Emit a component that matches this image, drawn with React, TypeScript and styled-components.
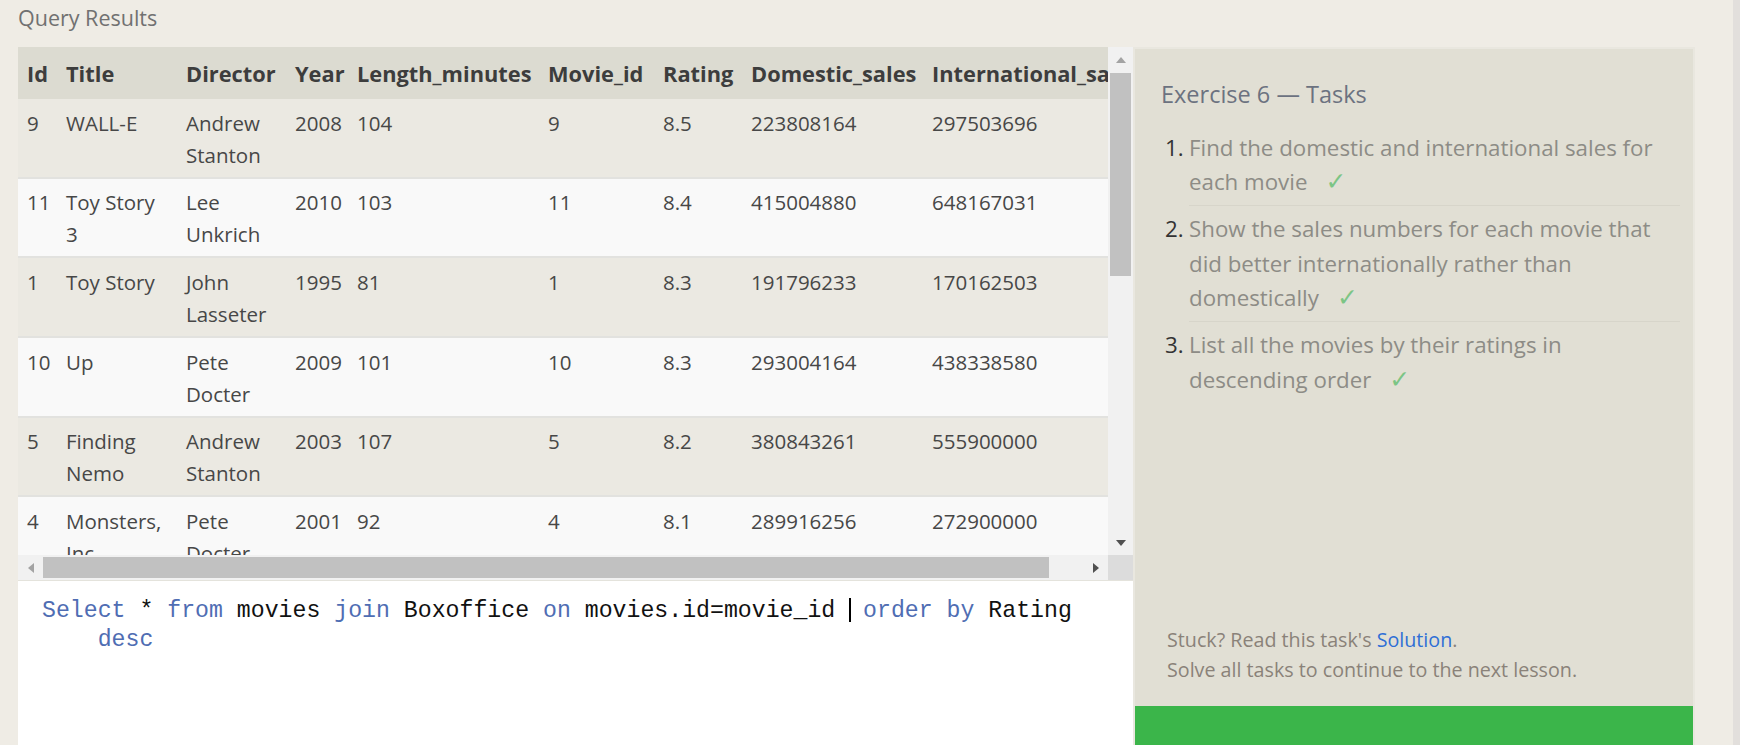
import React from "react";
import styled, { createGlobalStyle } from "styled-components";

const GlobalStyle = createGlobalStyle`
  html, body { margin: 0; padding: 0; }
  body {
    background: #efece5;
    font-family: "Open Sans", "Noto Sans", sans-serif;
    overflow: hidden;
  }
`;

const Page = styled.div`
  display: flex;
  width: 1740px;
  height: 745px;
  overflow: hidden;
`;

const Content = styled.div`
  flex: 1;
  min-width: 0;
  display: flex;
  flex-direction: column;
  padding-left: 18px;
`;

const WindowStrip = styled.div`
  width: 7px;
  background: #e2dfdc;
`;

const Heading = styled.h2`
  margin: 0;
  height: 47px;
  box-sizing: border-box;
  padding-top: 5px;
  font-size: 21.5px;
  line-height: 26px;
  font-weight: 400;
  color: #717171;
`;

const Main = styled.div`
  flex: 1;
  min-height: 0;
  display: flex;
`;

const LeftCol = styled.div`
  width: 1115px;
  display: flex;
  flex-direction: column;
`;

const ResultsBox = styled.div`
  display: grid;
  grid-template-columns: 1090px 25px;
  grid-template-rows: 508px 25px;
`;

const Viewport = styled.div`
  overflow: hidden;
  background: #f9f9f9;
`;

const Table = styled.table`
  border-collapse: collapse;
  table-layout: fixed;
  width: 1110px;
  font-size: 20.5px;
  color: #474747;
`;

const Col = styled.col<{ $w: number }>`
  width: ${(p) => p.$w}px;
`;

const HeadCell = styled.th`
  text-align: left;
  background: #dcdbd1;
  font-weight: 700;
  font-size: 21.8px;
  color: #3d3d3d;
  padding: 11px 9px 9px;
  line-height: 32px;
  white-space: nowrap;
`;

const Row = styled.tr<{ $alt: boolean }>`
  background: ${(p) => (p.$alt ? "#f9f9f9" : "#ebe9e2")};
`;

const Cell = styled.td`
  padding: 7.5px 9px 6.2px;
  line-height: 32px;
  vertical-align: top;
  white-space: pre-line;
  border-bottom: 2px solid #e2e2df;
`;

const VScroll = styled.div`
  background: #f1f1f1;
  display: flex;
  flex-direction: column;
  align-items: center;
`;

const HScroll = styled.div`
  background: #f1f1f1;
  display: flex;
  align-items: center;
`;

const Corner = styled.div`
  background: #dcdcdc;
`;

const ArrowBtn = styled.div<{ $size: number }>`
  flex: 0 0 ${(p) => p.$size}px;
  width: 25px;
  height: 25px;
  display: flex;
  align-items: center;
  justify-content: center;
`;

const VThumb = styled.div`
  width: 21px;
  height: 203px;
  background: #c1c1c1;
`;

const HThumb = styled.div`
  width: 1006px;
  height: 21px;
  background: #c1c1c1;
`;

const Spacer = styled.div`
  flex: 1;
`;

const Editor = styled.div`
  flex: 1;
  background: #ffffff;
  border-top: 1px solid #e4e3dc;
  padding: 16px 24px 0;
  font-family: "Liberation Mono", "DejaVu Sans Mono", monospace;
  font-size: 23.2px;
  line-height: 29px;
  color: #111111;
  white-space: pre;
`;

const CodeLine = styled.div<{ $indent?: number }>`
  padding-left: ${(p) => (p.$indent ?? 0) * 13.92}px;
`;

const Kw = styled.span`
  color: #4f6db3;
`;

const Caret = styled.span`
  display: inline-block;
  width: 2px;
  margin-right: -2px;
  height: 24px;
  vertical-align: -5px;
  background: #000;
`;

const Panel = styled.aside`
  width: 562px;
  box-sizing: border-box;
  border: 2px solid #e9e7df;
  border-bottom: none;
  background: #e1dfd4;
  display: flex;
  flex-direction: column;
`;

const PanelBody = styled.div`
  padding: 29px 13px 0 26px;
`;

const PanelTitle = styled.h3`
  margin: 0 0 14.5px;
  font-size: 23.5px;
  line-height: 32px;
  font-weight: 400;
  color: #6c7280;
`;

const TaskList = styled.ol`
  list-style: none;
  margin: 0 0 0 4px;
  padding: 0;
`;

const TaskItem = styled.li`
  display: flex;
  font-size: 22.3px;
  line-height: 34.5px;
`;

const TaskNum = styled.span`
  flex: 0 0 24px;
  color: #333333;
  padding-top: 6px;
`;

const TaskText = styled.div<{ $last: boolean }>`
  flex: 1;
  color: #8d8c86;
  padding: 6px 0 5.5px;
  border-bottom: ${(p) => (p.$last ? "none" : "1px solid #d7d5ca")};
`;

const Check = styled.span`
  font-family: "DejaVu Sans", sans-serif;
  font-size: 25px;
  line-height: 1;
  color: #7cc585;
  margin-left: 18px;
`;

const Footer = styled.div`
  margin-top: auto;
  padding: 0 0 21.5px 32px;
  font-size: 19.7px;
  line-height: 30px;
  color: #8a8279;
`;

const Link = styled.a`
  color: #2f6fd6;
  text-decoration: none;
`;

const GoButton = styled.div`
  height: 39px;
  flex: 0 0 39px;
  background: #3bb54a;
`;

type Dir = "up" | "down" | "left" | "right";

const Tri: React.FC<{ dir: Dir; on: boolean }> = ({ dir, on }) => {
  const fill = on ? "#505050" : "#a3a3a3";
  const pts: Record<Dir, string> = {
    up: "0,6 5,0 10,6",
    down: "0,0 10,0 5,6",
    left: "6,0 6,10 0,5",
    right: "0,0 6,5 0,10",
  };
  const vertical = dir === "up" || dir === "down";
  return (
    <svg
      width={vertical ? 10 : 6}
      height={vertical ? 6 : 10}
      viewBox={vertical ? "0 0 10 6" : "0 0 6 10"}
    >
      <polygon points={pts[dir]} fill={fill} />
    </svg>
  );
};

const columns: { name: string; w: number }[] = [
  { name: "Id", w: 39 },
  { name: "Title", w: 120 },
  { name: "Director", w: 109 },
  { name: "Year", w: 62 },
  { name: "Length_minutes", w: 191 },
  { name: "Movie_id", w: 115 },
  { name: "Rating", w: 88 },
  { name: "Domestic_sales", w: 181 },
  { name: "International_sales", w: 205 },
];

const rows: string[][] = [
  ["9", "WALL-E", "Andrew\nStanton", "2008", "104", "9", "8.5", "223808164", "297503696"],
  ["11", "Toy Story\n3", "Lee\nUnkrich", "2010", "103", "11", "8.4", "415004880", "648167031"],
  ["1", "Toy Story", "John\nLasseter", "1995", "81", "1", "8.3", "191796233", "170162503"],
  ["10", "Up", "Pete\nDocter", "2009", "101", "10", "8.3", "293004164", "438338580"],
  ["5", "Finding\nNemo", "Andrew\nStanton", "2003", "107", "5", "8.2", "380843261", "555900000"],
  ["4", "Monsters,\nInc.", "Pete\nDocter", "2001", "92", "4", "8.1", "289916256", "272900000"],
];

const tasks: string[] = [
  "Find the domestic and international sales for each movie",
  "Show the sales numbers for each movie that did better internationally rather than domestically",
  "List all the movies by their ratings in descending order",
];

export default function App() {
  return (
    <>
      <GlobalStyle />
      <Page>
        <Content>
          <Heading>Query Results</Heading>
          <Main>
            <LeftCol>
              <ResultsBox>
                <Viewport>
                  <Table>
                    <colgroup>
                      {columns.map((c) => (
                        <Col key={c.name} $w={c.w} />
                      ))}
                    </colgroup>
                    <thead>
                      <tr>
                        {columns.map((c) => (
                          <HeadCell key={c.name}>{c.name}</HeadCell>
                        ))}
                      </tr>
                    </thead>
                    <tbody>
                      {rows.map((r, i) => (
                        <Row key={i} $alt={i % 2 === 1}>
                          {r.map((v, j) => (
                            <Cell key={j}>{v}</Cell>
                          ))}
                        </Row>
                      ))}
                    </tbody>
                  </Table>
                </Viewport>
                <VScroll>
                  <ArrowBtn $size={26}>
                    <Tri dir="up" on={false} />
                  </ArrowBtn>
                  <VThumb />
                  <Spacer />
                  <ArrowBtn $size={25}>
                    <Tri dir="down" on={true} />
                  </ArrowBtn>
                </VScroll>
                <HScroll>
                  <ArrowBtn $size={25}>
                    <Tri dir="left" on={false} />
                  </ArrowBtn>
                  <HThumb />
                  <Spacer />
                  <ArrowBtn $size={25}>
                    <Tri dir="right" on={true} />
                  </ArrowBtn>
                </HScroll>
                <Corner />
              </ResultsBox>
              <Editor>
                <CodeLine>
                  <Kw>Select</Kw> * <Kw>from</Kw> movies <Kw>join</Kw> Boxoffice <Kw>on</Kw>{" "}
                  movies.id=movie_id <Caret /> <Kw>order</Kw> <Kw>by</Kw> Rating
                </CodeLine>
                <CodeLine $indent={4}>
                  <Kw>desc</Kw>
                </CodeLine>
              </Editor>
            </LeftCol>
            <Panel>
              <PanelBody>
                <PanelTitle>Exercise 6 — Tasks</PanelTitle>
                <TaskList>
                  {tasks.map((t, i) => (
                    <TaskItem key={i}>
                      <TaskNum>{i + 1}.</TaskNum>
                      <TaskText $last={i === tasks.length - 1}>
                        {t}
                        <Check>✓</Check>
                      </TaskText>
                    </TaskItem>
                  ))}
                </TaskList>
              </PanelBody>
              <Footer>
                Stuck? Read this task's <Link href="#">Solution</Link>.
                <br />
                Solve all tasks to continue to the next lesson.
              </Footer>
              <GoButton />
            </Panel>
          </Main>
        </Content>
        <WindowStrip />
      </Page>
    </>
  );
}
